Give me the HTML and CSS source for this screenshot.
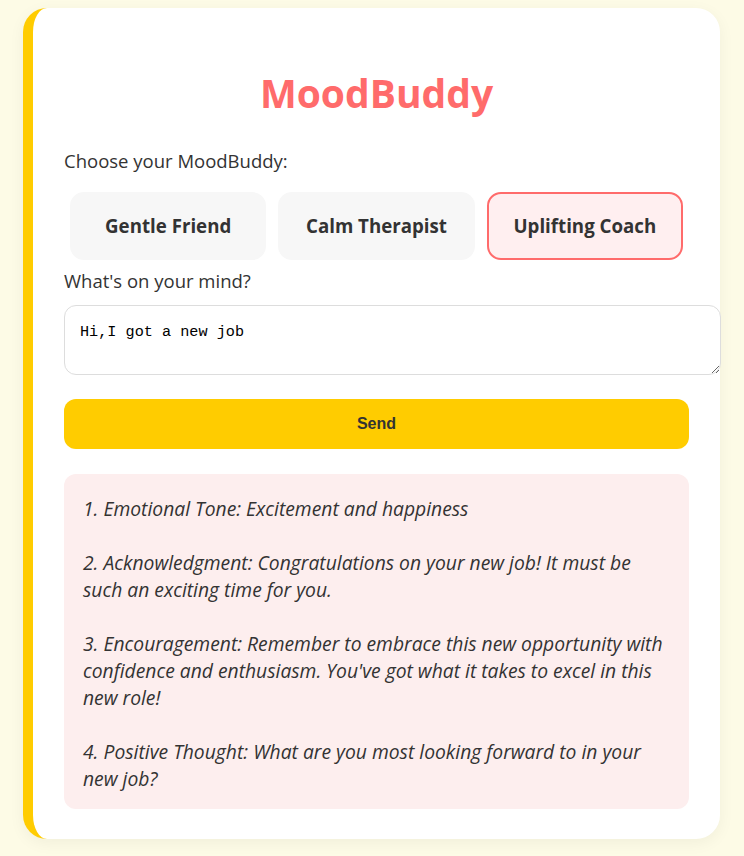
FILE: index.html
```html
<!DOCTYPE html>
<html>
<head>
<meta charset="utf-8">
<link rel="stylesheet" href="styles.css">
</head>
<body>
<div class="card">
  <h1 class="title">MoodBuddy</h1>
  <label class="label">Choose your MoodBuddy:</label>
  <div class="modes">
    <button class="mode">Gentle Friend</button>
    <button class="mode">Calm Therapist</button>
    <button class="mode active">Uplifting Coach</button>
  </div>
  <label class="label">What's on your mind?</label>
  <textarea class="input">Hi,I got a new job</textarea>
  <button class="send">Send</button>
  <div class="response">1. Emotional Tone: Excitement and happiness

2. Acknowledgment: Congratulations on your new job! It must be such an exciting time for you.

3. Encouragement: Remember to embrace this new opportunity with confidence and enthusiasm. You've got what it takes to excel in this new role!

4. Positive Thought: What are you most looking forward to in your new job?</div>
</div>
</body>
</html>
```

FILE: styles.css
```css
html, body {
  margin: 0;
  padding: 0;
}
body {
  background: #fdfbe6;
  font-family: "Open Sans", "Noto Sans", sans-serif;
  color: #333;
  padding: 8px 24px 16px 23px;
}
.card {
  width: 625px;
  background: #fff;
  border-left: 10px solid #ffcc00;
  border-radius: 24px;
  padding: 30px 31px 30px 31px;
  box-shadow: 0 4px 16px rgba(0,0,0,0.05);
}
.title {
  text-align: center;
  color: #ff6b6b;
  font-size: 39px;
  font-weight: 700;
  margin: 32px 0 32px;
  line-height: 1.2;
}
.label {
  display: block;
  font-size: 18.5px;
  line-height: 24px;
  color: #333;
}
.modes {
  display: flex;
  margin: 19px 0 9px;
}
.mode {
  flex: 1;
  margin: 0 6px;
  height: 68px;
  border: 2px solid #f7f7f7;
  background: #f7f7f7;
  border-radius: 14px;
  font-family: "Open Sans", sans-serif;
  font-weight: 700;
  font-size: 18.7px;
  color: #333;
  padding: 0;
}
.mode.active {
  background: #ffeff0;
  border-color: #ff6b6b;
}
.input {
  display: block;
  width: 100%;
  height: 38px;
  margin-top: 12px;
  padding: 15px;
  border: 1px solid #ddd;
  border-radius: 12px;
  font-family: "Liberation Mono", monospace;
  font-size: 15.2px;
  line-height: 23px;
  color: #000;
  resize: vertical;
}
.send {
  display: block;
  width: 100%;
  height: 50px;
  margin-top: 24px;
  background: #ffcc00;
  border: none;
  border-radius: 12px;
  font-family: "Liberation Sans", Arial, sans-serif;
  font-weight: 700;
  font-size: 16px;
  color: #333;
}
.response {
  margin-top: 25px;
  background: #fdeeee;
  border-radius: 12px;
  padding: 21px 19px 17px 19px;
  font-style: italic;
  font-size: 19.3px;
  line-height: 27px;
  white-space: pre-wrap;
  color: #333;
}
```
